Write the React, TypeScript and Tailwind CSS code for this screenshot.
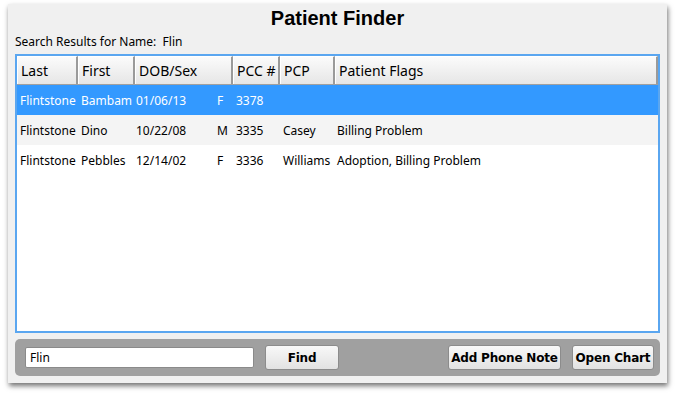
import React from "react";

const cols = [
  { label: "Last", w: 61 },
  { label: "First", w: 57 },
  { label: "DOB/Sex", w: 98 },
  { label: "PCC #", w: 47 },
  { label: "PCP", w: 55 },
  { label: "Patient Flags", w: 0 },
];

const rows = [
  { last: "Flintstone", first: "Bambam", dob: "01/06/13", sex: "F", pcc: "3378", pcp: "", flags: "", sel: true },
  { last: "Flintstone", first: "Dino", dob: "10/22/08", sex: "M", pcc: "3335", pcp: "Casey", flags: "Billing Problem", sel: false },
  { last: "Flintstone", first: "Pebbles", dob: "12/14/02", sex: "F", pcc: "3336", pcp: "Williams", flags: "Adoption, Billing Problem", sel: false },
];

function Btn({ children, w }: { children: React.ReactNode; w: string }) {
  return (
    <div
      className={`${w} h-[25px] flex items-center justify-center rounded-[3px] border border-[#8c8c8c] bg-gradient-to-b from-[#f8f8f8] to-[#e2e2e2] text-[12px] font-bold text-black whitespace-nowrap`}
      style={{ fontFamily: '"DejaVu Sans", sans-serif', letterSpacing: "-0.2px" }}
    >
      {children}
    </div>
  );
}

export default function App() {
  return (
    <div className="w-[676px] h-[395px] bg-white relative" style={{ fontFamily: '"Noto Sans", "Liberation Sans", sans-serif' }}>
      <div className="absolute left-[8px] top-[4px] w-[659px] h-[379px] bg-[#f0f0f0] shadow-[1px_3px_5px_rgba(0,0,0,0.55)] flex flex-col px-[7px]">
        <div
          className="h-[27px] flex items-end justify-center text-[20px] font-bold text-black leading-none pb-[3px]"
          style={{ fontFamily: '"Liberation Sans", sans-serif' }}
        >
          Patient Finder
        </div>
        <div className="h-[23px] flex items-center text-[12px] text-black leading-none whitespace-nowrap pb-[2px]">Search Results for Name:&nbsp; Flin</div>
        <div className="h-[279px] border-2 border-[#5aa6f0] bg-white flex flex-col">
          <div className="flex h-[29px] border-b border-[#a0a0a0]">
            {cols.map((c, i) => (
              <div
                key={i}
                className={`${c.w ? "" : "flex-1"} h-full flex items-center pl-[3px] pt-[1px] text-[14px] leading-none text-black whitespace-nowrap overflow-hidden border-t border-l border-[#ffffff] border-r-2 border-r-[#9a9a9a] bg-gradient-to-b from-[#fbfbfb] to-[#e6e6e6]`}
                style={c.w ? { width: c.w } : undefined}
              >
                {c.label}
              </div>
            ))}
          </div>
          {rows.map((r, i) => (
            <div
              key={i}
              className={`flex h-[30px] items-center text-[12px] leading-none whitespace-nowrap pt-[1px] ${r.sel ? "bg-[#3399ff] text-white" : i === 1 ? "bg-[#f4f4f4] text-black" : "bg-white text-black"}`}
            >
              <div className="w-[61px] pl-[3px]">{r.last}</div>
              <div className="w-[57px] pl-[3px]">{r.first}</div>
              <div className="w-[98px] pl-[1px] flex">
                <span className="w-[81px]">{r.dob}</span>
                <span>{r.sex}</span>
              </div>
              <div className="w-[47px] pl-[3px]">{r.pcc}</div>
              <div className="w-[55px] pl-[3px]">{r.pcp}</div>
              <div className="flex-1 pl-[2px]">{r.flags}</div>
            </div>
          ))}
        </div>
        <div className="mt-[6px] h-[37px] rounded-[5px] bg-[#a0a0a0] flex items-center pl-[10px] pr-[6px]">
          <div className="w-[229px] h-[21px] bg-white border border-[#8a8a8a] rounded-[2px] flex items-center pl-[4px] text-[12px] text-black">
            Flin
          </div>
          <div className="ml-[11px]">
            <Btn w="w-[74px]">Find</Btn>
          </div>
          <div className="flex-1" />
          <Btn w="w-[113px]">Add Phone Note</Btn>
          <div className="ml-[11px]">
            <Btn w="w-[82px]">Open Chart</Btn>
          </div>
        </div>
      </div>
    </div>
  );
}
